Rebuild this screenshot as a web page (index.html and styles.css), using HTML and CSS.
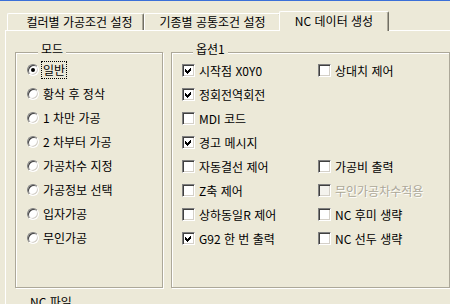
FILE: index.html
```html
<!DOCTYPE html>
<html lang="ko">
<head>
    <meta charset="UTF-8">
    <meta name="viewport" content="width=device-width, initial-scale=1.0">
    <title>NC 데이터 생성</title>
    <link rel="stylesheet" href="styles.css">
</head>
<body>
    <div class="frame-edge"></div>

    <div class="tabs">
        <div class="tab tab-1">컬러별 가공조건 설정</div>
        <div class="tab tab-2">기종별 공통조건 설정</div>
        <div class="tab active">NC 데이터 생성</div>
    </div>

    <div class="panel">
        <div class="groups">
            <fieldset class="group mode">
                <legend>모드</legend>
                <div class="option-list">
                    <div class="radio-row"><span class="radio checked"></span><span class="label focus">일반</span></div>
                    <div class="radio-row"><span class="radio"></span><span class="label">황삭 후 정삭</span></div>
                    <div class="radio-row"><span class="radio"></span><span class="label">1 차만 가공</span></div>
                    <div class="radio-row"><span class="radio"></span><span class="label">2 차부터 가공</span></div>
                    <div class="radio-row"><span class="radio"></span><span class="label">가공차수 지정</span></div>
                    <div class="radio-row"><span class="radio"></span><span class="label">가공정보 선택</span></div>
                    <div class="radio-row"><span class="radio"></span><span class="label">입자가공</span></div>
                    <div class="radio-row"><span class="radio"></span><span class="label">무인가공</span></div>
                </div>
            </fieldset>

            <fieldset class="group options">
                <legend>옵션1</legend>
                <div class="check-grid">
                    <div class="check-row"><span class="box checked"><svg width="7" height="7" viewBox="0 0 7 7"><path d="M0 2 L2 4 L6 0 L6 3 L2 7 L0 5 Z"/></svg></span>시작점 X0Y0</div>
                    <div class="check-row"><span class="box"></span>상대치 제어</div>

                    <div class="check-row"><span class="box checked"><svg width="7" height="7" viewBox="0 0 7 7"><path d="M0 2 L2 4 L6 0 L6 3 L2 7 L0 5 Z"/></svg></span>정회전역회전</div>
                    <div></div>

                    <div class="check-row"><span class="box"></span>MDI 코드</div>
                    <div></div>

                    <div class="check-row"><span class="box checked"><svg width="7" height="7" viewBox="0 0 7 7"><path d="M0 2 L2 4 L6 0 L6 3 L2 7 L0 5 Z"/></svg></span>경고 메시지</div>
                    <div></div>

                    <div class="check-row"><span class="box"></span>자동결선 제어</div>
                    <div class="check-row"><span class="box"></span>가공비 출력</div>

                    <div class="check-row"><span class="box"></span>Z축 제어</div>
                    <div class="check-row disabled"><span class="box"></span>무인가공차수적용</div>

                    <div class="check-row"><span class="box"></span>상하동일R 제어</div>
                    <div class="check-row"><span class="box"></span>NC 후미 생략</div>

                    <div class="check-row"><span class="box checked"><svg width="7" height="7" viewBox="0 0 7 7"><path d="M0 2 L2 4 L6 0 L6 3 L2 7 L0 5 Z"/></svg></span>G92 한 번 출력</div>
                    <div class="check-row"><span class="box"></span>NC 선두 생략</div>
                </div>
            </fieldset>
        </div>

        <fieldset class="group file">
            <legend>NC 파일</legend>
        </fieldset>
    </div>
</body>
</html>
```

FILE: styles.css
```css
* {
    box-sizing: border-box;
    margin: 0;
    padding: 0;
}
html, body {
    overflow: hidden;
}
body {
    width: 450px;
    height: 304px;
    background-color: #ECE9D8;
    font-family: "Noto Sans CJK KR", "Noto Sans", sans-serif;
    font-size: 12px;
    color: #000;
}
.frame-edge {
    height: 1px;
    background-color: #3a6fd8;
}

/* tab strip */
.tabs {
    display: flex;
    align-items: flex-end;
    height: 29px;
    padding-left: 7px;
}
.tab {
    width: 137px;
    height: 17px;
    border-top: 1px solid #fff;
    border-left: 1px solid #fff;
    border-right: 1px solid #716f64;
    box-shadow: inset -1px 0 0 #aca899;
    border-radius: 2px 2px 0 0;
    text-align: center;
    line-height: 15px;
    white-space: nowrap;
}
.tab-1 {
    padding-left: 8px;
}
.tab.active {
    width: 110px;
    height: 20px;
    margin: 0 -2px -1px -2px;
    position: relative;
    background-color: #ECE9D8;
    line-height: 17px;
}

.panel {
    margin-left: 5px;
    width: 460px;
    height: 300px;
    border-top: 1px solid #fff;
    border-left: 1px solid #fff;
    padding: 11px 0 0 9px;
}
.groups {
    display: flex;
    gap: 8px;
}

/* etched group box */
.group {
    border: 1px solid #aca899;
    box-shadow: 1px 1px 0 #fff, inset 1px 1px 0 #fff;
    min-width: 0;
}
.group legend {
    margin-left: 11px;
    padding: 0 3px 6px;
    line-height: 14px;
    background-color: #ECE9D8;
}
.mode {
    width: 148px;
    height: 246px;
    padding-left: 11px;
}
.options {
    width: 279px;
    height: 246px;
    padding-left: 10px;
}
.file {
    width: 435px;
    height: 40px;
    margin-top: 7px;
}

/* radios */
.option-list {
    display: grid;
    grid-auto-rows: 24px;
    margin-top: -4px;
}
.radio-row {
    display: flex;
    align-items: center;
}
.radio {
    width: 12px;
    height: 12px;
    flex: none;
    border-radius: 50%;
    border: 1px solid;
    border-color: #808080 #fff #fff #808080;
    box-shadow: inset 1px 1px 0 #404040, inset -1px -1px 0 #d4d0c8;
    background-color: #fff;
    margin-right: 2px;
    display: flex;
    align-items: center;
    justify-content: center;
}
.radio.checked::after {
    content: "";
    width: 4px;
    height: 4px;
    border-radius: 50%;
    background-color: #000;
}
.label {
    padding: 1px;
    border: 1px dotted transparent;
    line-height: 14px;
}
.label.focus {
    border-color: #000;
}

/* checkboxes */
.check-grid {
    display: grid;
    grid-template-columns: 136px 1fr;
    grid-auto-rows: 24px;
    margin-top: -4px;
}
.check-row {
    display: flex;
    align-items: center;
    gap: 4px;
    white-space: nowrap;
}
.box {
    width: 13px;
    height: 13px;
    flex: none;
    border: 1px solid;
    border-color: #808080 #fff #fff #808080;
    box-shadow: inset 1px 1px 0 #404040, inset -1px -1px 0 #d4d0c8;
    background-color: #fff;
    display: flex;
    align-items: center;
    justify-content: center;
}
.box svg {
    display: block;
    shape-rendering: crispEdges;
}
.disabled {
    color: #aca899;
    text-shadow: 1px 1px 0 #fff;
}
.disabled .box {
    background-color: #f4f3ee;
}
```
